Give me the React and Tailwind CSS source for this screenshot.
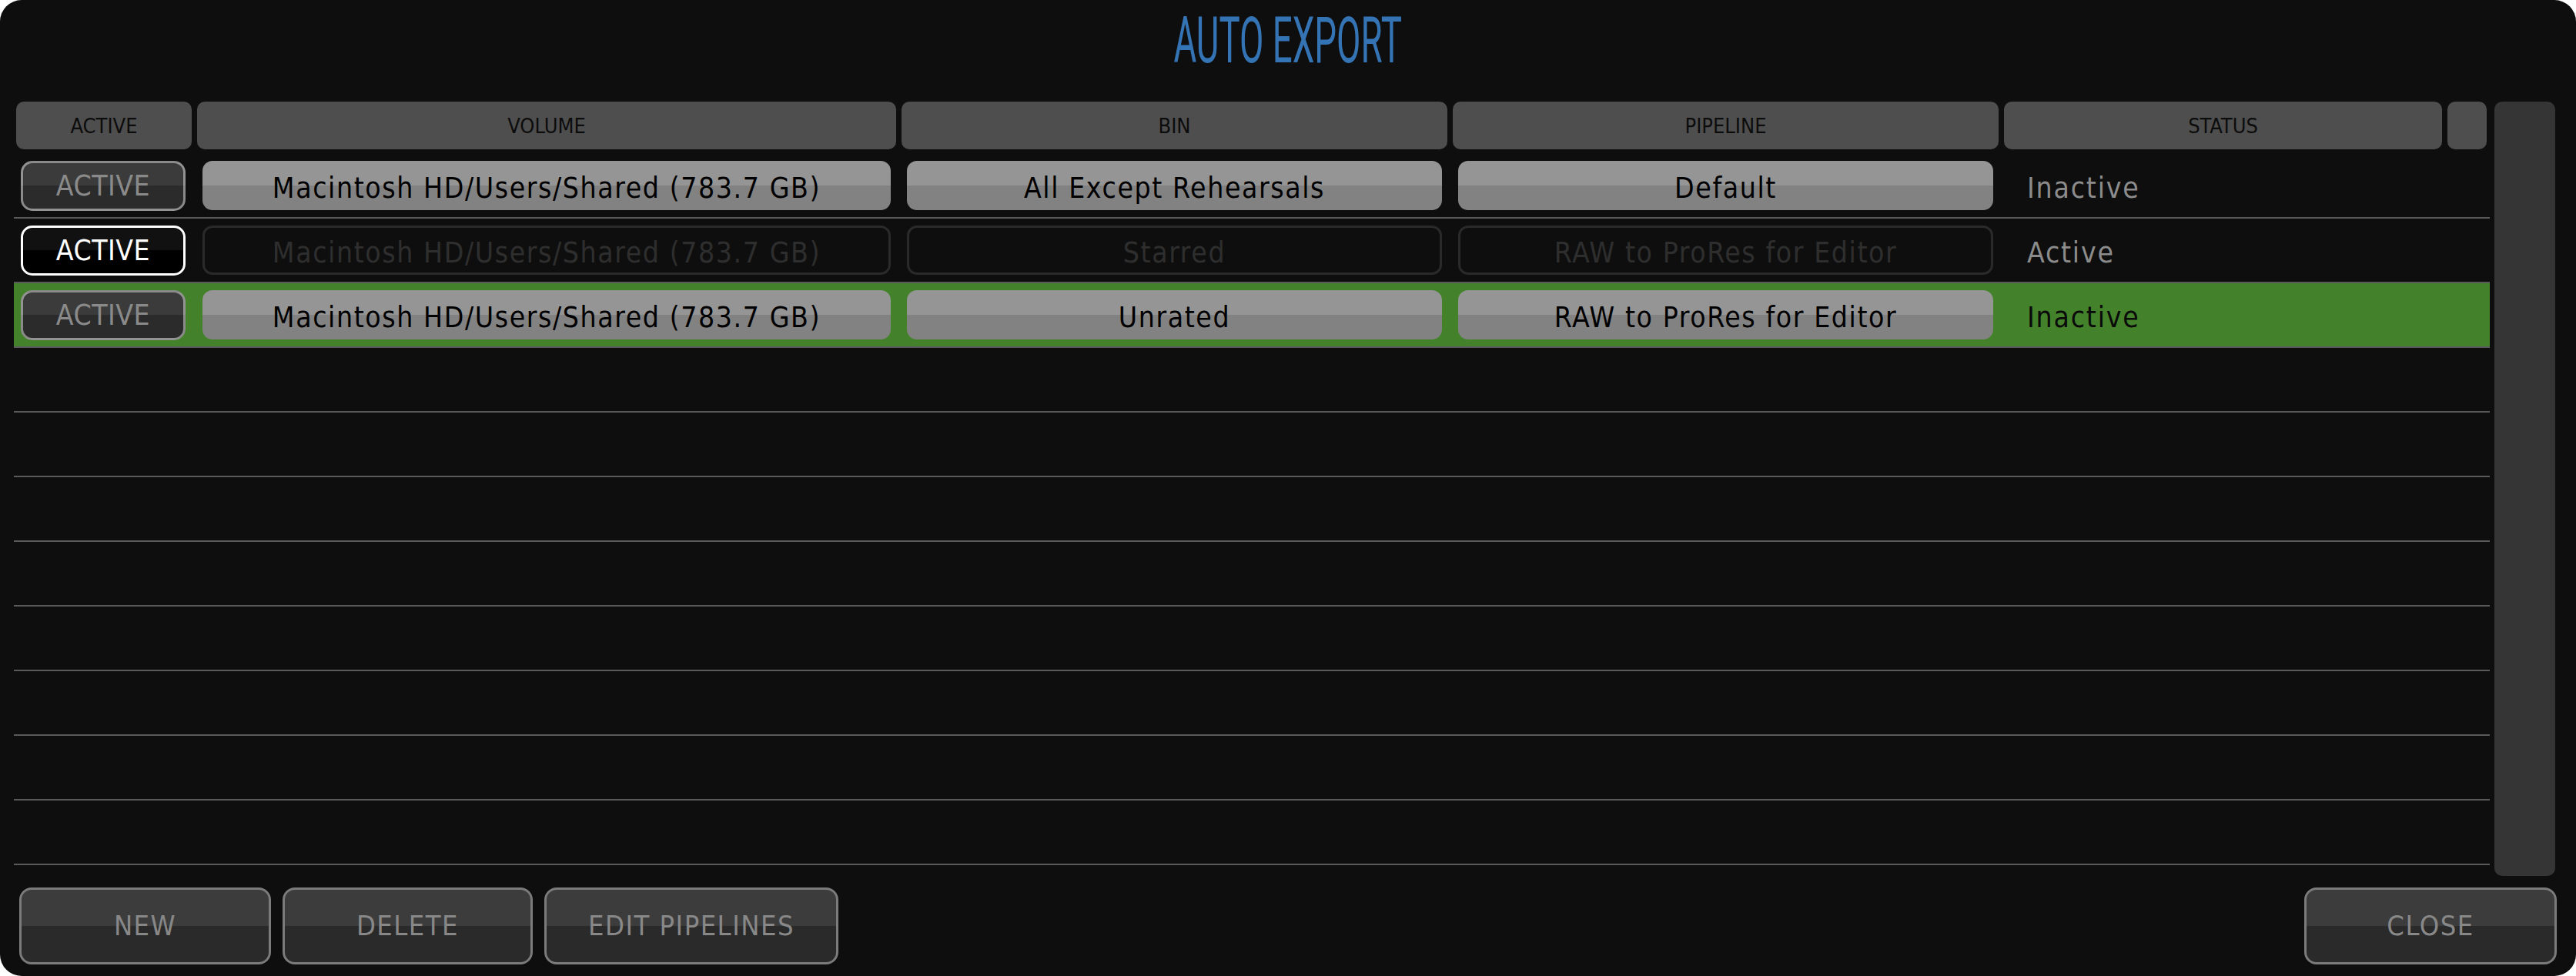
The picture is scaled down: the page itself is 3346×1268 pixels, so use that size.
import React from "react";

const rows = [
  {
    on: false,
    enabled: true,
    selected: false,
    volume: "Macintosh HD/Users/Shared (783.7 GB)",
    bin: "All Except Rehearsals",
    pipeline: "Default",
    status: "Inactive",
  },
  {
    on: true,
    enabled: false,
    selected: false,
    volume: "Macintosh HD/Users/Shared (783.7 GB)",
    bin: "Starred",
    pipeline: "RAW to ProRes for Editor",
    status: "Active",
  },
  {
    on: false,
    enabled: true,
    selected: true,
    volume: "Macintosh HD/Users/Shared (783.7 GB)",
    bin: "Unrated",
    pipeline: "RAW to ProRes for Editor",
    status: "Inactive",
  },
];

const GRID = "grid grid-cols-[228px_908px_709px_709px_569px_51px] gap-x-[7px] px-[3px]";

function ActiveButton({ on }) {
  if (on) {
    return (
      <div className="ml-[6px] mr-[8px] h-[65px] rounded-[15px] border-[3px] border-white bg-[linear-gradient(to_bottom,#111111_50%,#000000_50%)] flex items-center justify-center text-[37px] tracking-[0.5px] text-white leading-none">
        ACTIVE
      </div>
    );
  }
  return (
    <div className="ml-[6px] mr-[8px] h-[65px] rounded-[15px] border-[3px] border-white/45 bg-[linear-gradient(to_bottom,#3b3b3b_50%,#2b2b2b_50%)] flex items-center justify-center text-[37px] tracking-[0.5px] text-[#8a8a8a] leading-none">
      ACTIVE
    </div>
  );
}

function Dropdown({ label, enabled }) {
  if (enabled) {
    return (
      <div className="mx-[7px] h-[64px] rounded-[13px] bg-[linear-gradient(to_bottom,#959595_50%,#828282_50%)] flex items-center justify-center pt-[6px] text-[37px] tracking-[1.6px] text-black leading-none whitespace-nowrap">
        {label}
      </div>
    );
  }
  return (
    <div className="mx-[7px] h-[64px] rounded-[13px] border-[3px] border-[#2a2a2a] flex items-center justify-center pt-[6px] text-[37px] tracking-[1.6px] text-[#2e2e2e] leading-none whitespace-nowrap">
      {label}
    </div>
  );
}

function Row({ row }) {
  return (
    <div>
      <div className={`${GRID} h-[82px] items-center ${row && row.selected ? "bg-[#43822a]" : ""}`}>
        {row ? (
          <>
            <ActiveButton on={row.on} />
            <Dropdown label={row.volume} enabled={row.enabled} />
            <Dropdown label={row.bin} enabled={row.enabled} />
            <Dropdown label={row.pipeline} enabled={row.enabled} />
            <div
              className={`pl-[30px] pt-[6px] text-[37px] tracking-[1.8px] leading-none ${
                row.selected ? "text-[#0a0a0a]" : "text-[#8c8c8c]"
              }`}
            >
              {row.status}
            </div>
            <div />
          </>
        ) : null}
      </div>
      <div className="h-[2px] bg-[#5a5a5a]" />
    </div>
  );
}

function Header({ children }) {
  return (
    <div className="h-[62px] rounded-[10px] bg-[#4e4e4e] flex items-center justify-center text-[27px] text-[#0c0c0c] leading-none">
      {children}
    </div>
  );
}

function BottomButton({ children, w }) {
  return (
    <div
      className={`${w} h-[100px] rounded-[16px] border-[3px] border-[#7b7b7b] bg-[linear-gradient(to_bottom,#3c3c3c_50%,#2a2a2a_50%)] flex items-center justify-center text-[36px] tracking-[1.5px] text-[#888888] leading-none`}
    >
      {children}
    </div>
  );
}

export default function App() {
  const all = [...rows, ...Array(8).fill(null)];
  return (
    <div className="w-[3346px] h-[1268px] bg-white font-['DejaVu_Sans_Condensed','Liberation_Sans_Narrow','Liberation_Sans',sans-serif]">
      <div className="w-full h-full rounded-[28px] bg-[#0e0e0e] flex flex-col overflow-hidden">
        <div className="h-[132px] flex justify-center">
          <div className="pt-[11px]">
            <div className="inline-block scale-x-[0.55] font-['Roboto',sans-serif] font-normal text-[83px] leading-none text-[#3574b4] whitespace-nowrap">
              AUTO EXPORT
            </div>
          </div>
        </div>
        <div className="flex pl-[18px] gap-[6px]">
          <div className="w-[3216px]">
            <div className={GRID}>
              <Header>ACTIVE</Header>
              <Header>VOLUME</Header>
              <Header>BIN</Header>
              <Header>PIPELINE</Header>
              <Header>STATUS</Header>
              <Header />
            </div>
            <div className="mt-[6px]">
              {all.map((r, i) => (
                <Row key={i} row={r} />
              ))}
            </div>
          </div>
          <div className="w-[79px] h-[1006px] rounded-[10px] bg-[#353535]" />
        </div>
        <div className="mt-[15px] flex justify-between px-[25px]">
          <div className="flex gap-[15px]">
            <BottomButton w="w-[327px]">NEW</BottomButton>
            <BottomButton w="w-[325px]">DELETE</BottomButton>
            <BottomButton w="w-[382px]">EDIT PIPELINES</BottomButton>
          </div>
          <BottomButton w="w-[328px]">CLOSE</BottomButton>
        </div>
      </div>
    </div>
  );
}
